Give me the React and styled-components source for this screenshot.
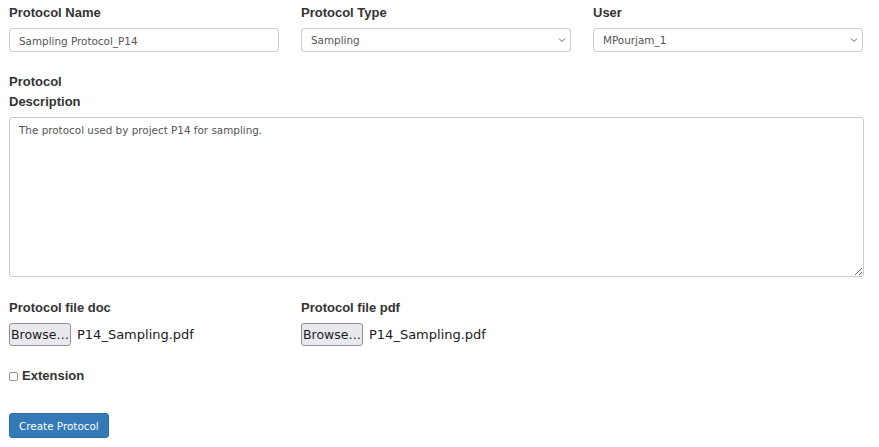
import React from "react";
import styled, { createGlobalStyle } from "styled-components";

const Global = createGlobalStyle`
  html, body { margin: 0; padding: 0; background: #fff; }
  body { font-family: "Liberation Sans", Arial, sans-serif; color: #333; }
  * { box-sizing: border-box; }
`;

const Page = styled.form`
  padding: 3px 9px 0 9px;
  width: 879px;
`;

const Row = styled.div`
  display: grid;
  grid-template-columns: repeat(3, 270px);
  column-gap: 22px;
`;

const Field = styled.div`
  display: flex;
  flex-direction: column;
`;

const Label = styled.label`
  font-weight: bold;
  font-size: 13px;
  line-height: 20px;
  margin-bottom: 5px;
  max-width: ${(p) => (p.$narrow ? "90px" : "none")};
`;

const SingleLine = styled.textarea`
  display: block;
  height: 24px;
  width: 100%;
  border: 1px solid #ccc;
  border-radius: 3px;
  padding: 4px 9px 0;
  font-family: "DejaVu Sans", sans-serif;
  font-size: 10.4px;
  line-height: 16px;
  color: #555;
  background: #fff;
  outline: none;
  resize: none;
  overflow: hidden;
  white-space: nowrap;
`;

const SelectWrap = styled.div`
  position: relative;
  width: 100%;
  height: 24px;
`;

const Select = styled.select`
  appearance: none;
  -webkit-appearance: none;
  height: 24px;
  width: 100%;
  border: 1px solid #ccc;
  border-radius: 3px;
  padding: 3px 24px 3px 9px;
  font-family: "DejaVu Sans", sans-serif;
  font-size: 10.4px;
  line-height: 16px;
  color: #555;
  background: #fff;
  outline: none;
`;

const Chevron = styled.svg`
  position: absolute;
  right: 5px;
  top: 9px;
  width: 8px;
  height: 6px;
  pointer-events: none;
`;

const TextArea = styled.textarea`
  width: 855px;
  height: 160px;
  border: 1px solid #ccc;
  border-radius: 3px;
  padding: 5px 9px;
  font-family: "DejaVu Sans", sans-serif;
  font-size: 10.4px;
  line-height: 14px;
  color: #555;
  outline: none;
  display: block;
`;

const DescBlock = styled.div`
  margin-top: 20px;
  display: flex;
  flex-direction: column;
  margin-bottom: 21px;
`;

const FileLine = styled.div`
  display: flex;
  align-items: center;
  gap: 6px;
  height: 23px;
`;

const BrowseButton = styled.button`
  height: 23px;
  width: 62px;
  padding: 0;
  border: 1px solid #8f8f9d;
  border-radius: 3px;
  background: #e9e9ed;
  font-family: "DejaVu Sans", sans-serif;
  font-size: 12.5px;
  color: #1b1b1b;
  white-space: nowrap;
`;

const FileName = styled.span`
  font-family: "DejaVu Sans", sans-serif;
  font-size: 13px;
  color: #1b1b1b;
`;

const CheckRow = styled.label`
  display: flex;
  align-items: center;
  gap: 4px;
  font-weight: bold;
  font-size: 13px;
  line-height: 20px;
  margin-top: 20px;
  margin-bottom: 27px;
`;

const Box = styled.span`
  width: 9px;
  height: 9px;
  border: 1px solid #8f8f9d;
  border-radius: 2px;
  background: #fff;
  margin-top: 1px;
`;

const Primary = styled.button`
  height: 25px;
  padding: 0 9px;
  border: 1px solid #2e6da4;
  border-radius: 3px;
  background: #337ab7;
  color: #fff;
  font-family: "DejaVu Sans", sans-serif;
  font-size: 10.4px;
`;

function ChevronIcon() {
  return (
    <Chevron viewBox="0 0 8 6">
      <path d="M1 1.5 L4 4.5 L7 1.5" fill="none" stroke="#666" strokeWidth="1" />
    </Chevron>
  );
}

export default function App() {
  return (
    <>
      <Global />
      <Page onSubmit={(e) => e.preventDefault()}>
        <Row>
          <Field>
            <Label>Protocol Name</Label>
            <SingleLine rows={1} defaultValue="Sampling Protocol_P14" />
          </Field>
          <Field>
            <Label>Protocol Type</Label>
            <SelectWrap>
              <Select defaultValue="Sampling">
                <option>Sampling</option>
              </Select>
              <ChevronIcon />
            </SelectWrap>
          </Field>
          <Field>
            <Label>User</Label>
            <SelectWrap>
              <Select defaultValue="MPourjam_1">
                <option>MPourjam_1</option>
              </Select>
              <ChevronIcon />
            </SelectWrap>
          </Field>
        </Row>
        <DescBlock>
          <Label $narrow>Protocol Description</Label>
          <TextArea defaultValue="The protocol used by project P14 for sampling." />
        </DescBlock>
        <Row>
          <Field>
            <Label>Protocol file doc</Label>
            <FileLine>
              <BrowseButton type="button">Browse…</BrowseButton>
              <FileName>P14_Sampling.pdf</FileName>
            </FileLine>
          </Field>
          <Field>
            <Label>Protocol file pdf</Label>
            <FileLine>
              <BrowseButton type="button">Browse…</BrowseButton>
              <FileName>P14_Sampling.pdf</FileName>
            </FileLine>
          </Field>
        </Row>
        <CheckRow>
          <Box />
          Extension
        </CheckRow>
        <Primary type="submit">Create Protocol</Primary>
      </Page>
    </>
  );
}
